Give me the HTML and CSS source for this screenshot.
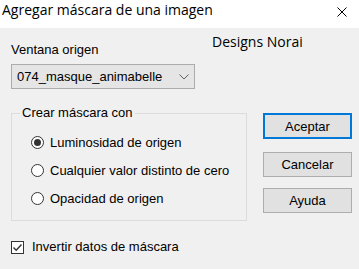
FILE: index.html
```html
<!DOCTYPE html>
<html lang="es">
<head>
    <meta charset="UTF-8">
    <meta name="viewport" content="width=device-width, initial-scale=1.0">
    <title>Agregar máscara de una imagen</title>
    <link rel="stylesheet" href="styles.css">
</head>
<body>
    <div class="dialog">
        <div class="titlebar">
            <span class="title">Agregar máscara de una imagen</span>
            <svg class="close" width="10" height="10" viewBox="0 0 10 10">
                <path d="M0.5 0.5 L9.5 9.5 M9.5 0.5 L0.5 9.5" stroke="#000" stroke-width="1" fill="none"/>
            </svg>
        </div>

        <div class="content">
            <div class="top">
                <div class="source">
                    <div class="label">Ventana origen</div>
                    <div class="select">
                        <span>074_masque_animabelle</span>
                        <svg width="10" height="6" viewBox="0 0 10 6">
                            <path d="M0.5 0.5 L5 5 L9.5 0.5" stroke="#606060" stroke-width="1" fill="none"/>
                        </svg>
                    </div>
                </div>
                <div class="brand">Designs Norai</div>
            </div>

            <div class="middle">
                <fieldset class="group">
                    <legend>Crear máscara con</legend>
                    <div class="radio-row">
                        <span class="radio checked"></span>
                        <span>Luminosidad de origen</span>
                    </div>
                    <div class="radio-row">
                        <span class="radio"></span>
                        <span>Cualquier valor distinto de cero</span>
                    </div>
                    <div class="radio-row">
                        <span class="radio"></span>
                        <span>Opacidad de origen</span>
                    </div>
                </fieldset>

                <div class="buttons">
                    <button class="btn default">Aceptar</button>
                    <button class="btn">Cancelar</button>
                    <button class="btn">Ayuda</button>
                </div>
            </div>

            <div class="check-row">
                <span class="checkbox">
                    <svg width="11" height="11" viewBox="0 0 11 11">
                        <path d="M1.5 5.5 L4.2 8.3 L9.5 2.5" stroke="#333" stroke-width="1.4" fill="none"/>
                    </svg>
                </span>
                <span>Invertir datos de máscara</span>
            </div>
        </div>
    </div>
</body>
</html>
```

FILE: styles.css
```css
body {
    margin: 0;
    font-family: "Liberation Sans", Arial, sans-serif;
    font-size: 13px;
    color: #000;
    background-color: #f0f0f0;
}

.dialog {
    width: 359px;
    height: 269px;
    background-color: #f0f0f0;
    overflow: hidden;
}

.titlebar {
    height: 28px;
    background-color: #fff;
    display: flex;
    align-items: flex-start;
    justify-content: space-between;
    padding: 0 12px 0 2px;
}

.title {
    font-family: "Open Sans", sans-serif;
    font-size: 14px;
    line-height: 20px;
}

.close {
    margin-top: 7px;
}

.content {
    padding-left: 11px;
}

.top {
    display: flex;
    align-items: flex-start;
}

.source {
    width: 184px;
}

.label {
    line-height: 16px;
    margin-top: 14px;
}

.select {
    margin-top: 6px;
    height: 25px;
    box-sizing: border-box;
    border: 1px solid #acacac;
    background-color: #e5e5e5;
    display: flex;
    align-items: center;
    justify-content: space-between;
    padding: 0 5px 0 5px;
}

.brand {
    font-family: "Open Sans", sans-serif;
    font-size: 14px;
    line-height: 18px;
    margin-top: 5px;
    margin-left: 17px;
}

.middle {
    display: flex;
    align-items: flex-start;
    margin-top: 17px;
}

.group {
    margin: 0;
    width: 236px;
    box-sizing: border-box;
    border: 1px solid #dcdcdc;
    padding: 8px 0 8px 19px;
}

.group legend {
    line-height: 14px;
    padding: 0 2px;
    margin-left: -11px;
}

.radio-row {
    height: 28px;
    display: flex;
    align-items: center;
    gap: 6px;
}

.radio {
    width: 13px;
    height: 13px;
    box-sizing: border-box;
    border: 1px solid #333;
    border-radius: 50%;
    background-color: #fff;
    display: flex;
    align-items: center;
    justify-content: center;
}

.radio.checked::after {
    content: "";
    width: 7px;
    height: 7px;
    border-radius: 50%;
    background-color: #333;
}

.buttons {
    margin-left: 16px;
    margin-top: 7px;
    display: flex;
    flex-direction: column;
    gap: 11px;
}

.btn {
    width: 89px;
    height: 25px;
    box-sizing: border-box;
    font-family: "Liberation Sans", Arial, sans-serif;
    font-size: 13px;
    color: #000;
    background-color: #e1e1e1;
    border: 1px solid #adadad;
    padding: 0;
}

.btn.default {
    height: 26px;
    margin-bottom: 2px;
    border: 2px solid #0078d7;
}

.check-row {
    margin-top: 18px;
    line-height: 16px;
    display: flex;
    align-items: center;
    gap: 8px;
}

.checkbox {
    width: 13px;
    height: 13px;
    box-sizing: border-box;
    border: 1px solid #333;
    background-color: #fff;
    display: flex;
    align-items: center;
    justify-content: center;
}
```
